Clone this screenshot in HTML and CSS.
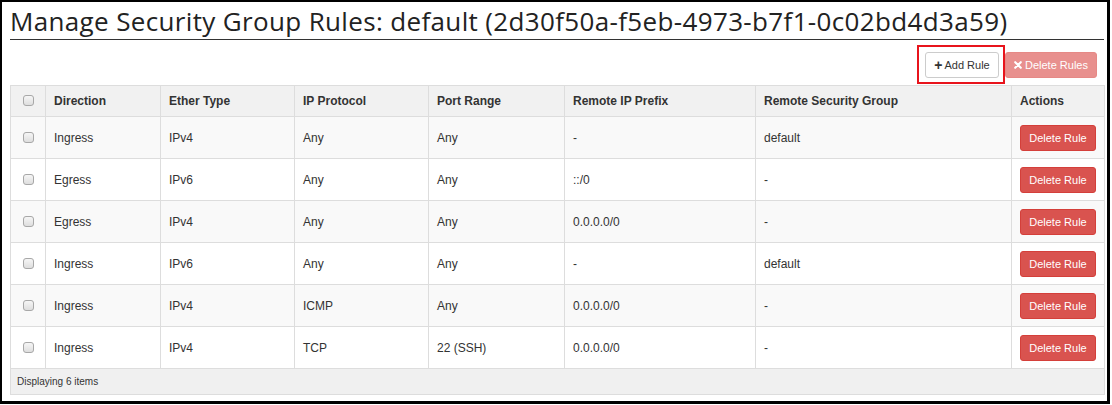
FILE: index.html
```html
<!DOCTYPE html>
<html>
<head>
<meta charset="utf-8">
<link rel="stylesheet" href="styles.css">
</head>
<body>
<div class="frame">
  <div class="content">
    <h1 class="title">Manage Security Group Rules: default (2d30f50a-f5eb-4973-b7f1-0c02bd4d3a59)</h1>
    <div class="toolbar">
      <div class="highlight-wrap">
        <button class="btn btn-default"><span class="plus">+</span>Add Rule</button>
        <span class="highlight"></span>
      </div>
      <button class="btn btn-danger-disabled"><svg class="xicon" viewBox="0 0 10 10" width="8" height="8"><path d="M1.5 1.5 L8.5 8.5 M8.5 1.5 L1.5 8.5" stroke="#fff" stroke-width="2.6" stroke-linecap="round"/></svg>Delete Rules</button>
    </div>
    <table class="rules">
      <colgroup>
        <col style="width:35px"><col style="width:115px"><col style="width:134px"><col style="width:134px"><col style="width:136px"><col style="width:191px"><col style="width:256px"><col style="width:93px">
      </colgroup>
      <thead>
        <tr>
          <th class="cb"><input type="checkbox" class="chk"></th>
          <th>Direction</th><th>Ether Type</th><th>IP Protocol</th><th>Port Range</th><th>Remote IP Prefix</th><th>Remote Security Group</th><th>Actions</th>
        </tr>
      </thead>
      <tbody>
        <tr><td class="cb"><input type="checkbox" class="chk"></td><td>Ingress</td><td>IPv4</td><td>Any</td><td>Any</td><td>-</td><td>default</td><td><button class="btn btn-danger">Delete Rule</button></td></tr>
        <tr><td class="cb"><input type="checkbox" class="chk"></td><td>Egress</td><td>IPv6</td><td>Any</td><td>Any</td><td>::/0</td><td>-</td><td><button class="btn btn-danger">Delete Rule</button></td></tr>
        <tr><td class="cb"><input type="checkbox" class="chk"></td><td>Egress</td><td>IPv4</td><td>Any</td><td>Any</td><td>0.0.0.0/0</td><td>-</td><td><button class="btn btn-danger">Delete Rule</button></td></tr>
        <tr><td class="cb"><input type="checkbox" class="chk"></td><td>Ingress</td><td>IPv6</td><td>Any</td><td>Any</td><td>-</td><td>default</td><td><button class="btn btn-danger">Delete Rule</button></td></tr>
        <tr><td class="cb"><input type="checkbox" class="chk"></td><td>Ingress</td><td>IPv4</td><td>ICMP</td><td>Any</td><td>0.0.0.0/0</td><td>-</td><td><button class="btn btn-danger">Delete Rule</button></td></tr>
        <tr><td class="cb"><input type="checkbox" class="chk"></td><td>Ingress</td><td>IPv4</td><td>TCP</td><td>22 (SSH)</td><td>0.0.0.0/0</td><td>-</td><td><button class="btn btn-danger">Delete Rule</button></td></tr>
      </tbody>
      <tfoot>
        <tr><td colspan="8" class="foot">Displaying 6 items</td></tr>
      </tfoot>
    </table>
  </div>
</div>
</body>
</html>
```

FILE: styles.css
```css
html, body {
  margin: 0;
  padding: 0;
  background: #fff;
}
.frame {
  box-sizing: border-box;
  width: 1110px;
  height: 404px;
  border-style: solid;
  border-color: #000;
  border-width: 2px 3px 3px 2px;
  padding: 0 0 0 8px;
}
.content {
  width: 1094px;
  font-family: "Liberation Sans", Arial, sans-serif;
  font-size: 12px;
  color: #333;
}
.title {
  margin: 0;
  padding: 4px 0 3px 0;
  font-family: "Open Sans", "Noto Sans", sans-serif;
  font-weight: 400;
  font-size: 26px;
  line-height: 30px;
  color: #222;
  border-bottom: 1px solid #333;
  white-space: nowrap;
  letter-spacing: 0.35px;
}
.toolbar {
  display: flex;
  justify-content: flex-end;
  gap: 6px;
  padding: 12px 7px 7px 0;
}
.highlight-wrap {
  position: relative;
}
.highlight {
  position: absolute;
  left: -8px;
  top: -7px;
  right: -6px;
  bottom: -6px;
  border: 2px solid #e8141c;
}
.btn {
  box-sizing: border-box;
  height: 26px;
  padding: 0 8px;
  font-family: "Liberation Sans", Arial, sans-serif;
  font-size: 11px;
  border-radius: 3px;
  border: 1px solid transparent;
  display: inline-flex;
  align-items: center;
  cursor: pointer;
}
.btn-default {
  background: #fff;
  border-color: #ccc;
  color: #333;
  width: 74px;
  justify-content: center;
}
.plus {
  font-weight: bold;
  font-size: 14px;
  margin-right: 2px;
  line-height: 1;
}
.btn-danger-disabled {
  background: #e8908e;
  border-color: #e68986;
  color: #fff;
  width: 92px;
  justify-content: center;
}
.xicon {
  margin-right: 3px;
}
.btn-danger {
  background: #d9534f;
  border-color: #d43f3a;
  color: #fff;
  width: 76px;
  justify-content: center;
}
.rules {
  width: 1094px;
  table-layout: fixed;
  border-collapse: collapse;
  border: 1px solid #ddd;
}
.rules th, .rules td {
  border: 1px solid #ddd;
  padding: 0 8px;
  text-align: left;
  vertical-align: middle;
}
.rules th {
  height: 30px;
  background: #f1f1f1;
  font-weight: bold;
}
.rules tbody td {
  height: 41px;
}
.rules tbody tr:nth-child(odd) td {
  background: #f9f9f9;
}
.rules .cb {
  text-align: center;
  padding: 0;
}
.chk {
  appearance: none;
  -webkit-appearance: none;
  width: 11px;
  height: 11px;
  margin: 0;
  border: 1px solid #a8a8a8;
  border-radius: 3px;
  background: linear-gradient(#f6f6f6, #dedede);
  vertical-align: middle;
  position: relative;
  top: -1px;
}
.rules .foot {
  background: #f0f0f0;
  height: 25px;
  font-size: 10px;
  padding: 0 6px;
}
```
